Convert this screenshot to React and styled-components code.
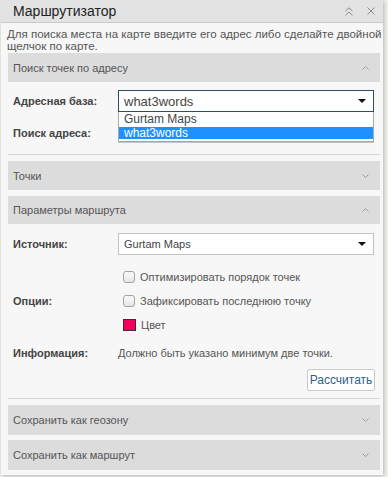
import React from "react";
import styled, { createGlobalStyle } from "styled-components";

const Global = createGlobalStyle`
  html, body { margin: 0; padding: 0; }
  body {
    width: 388px; height: 477px; overflow: hidden;
    background: #f2f0eb;
    font-family: "Liberation Sans", Arial, sans-serif;
  }
`;

const Page = styled.div`
  width: 388px;
  height: 477px;
  background: #f2f0eb;
  display: flex;
  align-items: flex-start;
`;

const Panel = styled.div`
  width: 382px;
  margin-left: 1px;
  background: #f7f7f7;
  box-shadow: 1px 1px 4px rgba(0, 0, 0, 0.25);
  padding-bottom: 5px;
`;

const Header = styled.div`
  height: 23px;
  box-sizing: border-box;
  background: #e3e3e3;
  border-bottom: 1px solid #c9c9c9;
  display: flex;
  align-items: center;
  padding: 0 8px 0 12px;
`;

const Title = styled.div`
  flex: 1;
  font-size: 14px;
  color: #222;
`;

const HeaderIcons = styled.div`
  display: flex;
  gap: 14px;
  align-items: center;
`;

const IconBtn = styled.span`
  display: inline-flex;
  width: 8px;
  height: 10px;
  align-items: center;
  justify-content: center;
`;

const Body = styled.div`
  padding: 5px 3px 0 6px;
`;

const Description = styled.p`
  margin: 0 -5px 0 0;
  font-size: 11.5px;
  line-height: 12px;
  color: #555;
  height: 25px;
`;

const Section = styled.div`
  margin-left: 1px;
  margin-bottom: ${(p) => p.$mb ?? 6}px;
  border-bottom: ${(p) => (p.$open ? "1px solid #d6d6d6" : "none")};
`;

const SectionHead = styled.div`
  height: ${(p) => p.$h ?? 29}px;
  background: #dcdcdc;
  display: flex;
  align-items: center;
  padding: 0 11px 0 5px;
  font-size: 11px;
  color: #555;
`;

const HeadText = styled.span`
  flex: 1;
`;

const Content = styled.div`
  padding: ${(p) => p.$pad};
  display: flex;
  flex-direction: column;
`;

const Row = styled.div`
  display: flex;
  align-items: center;
  min-height: ${(p) => p.$h ?? 22}px;
  margin-top: ${(p) => p.$mt ?? 0}px;
  padding-left: 5px;
`;

const Label = styled.div`
  width: 105px;
  flex: none;
  font-size: 11px;
  font-weight: bold;
  color: #444;
`;

const SelectWrap = styled.div`
  position: relative;
  width: 256px;
`;

const SelectBox = styled.div`
  height: 22px;
  box-sizing: border-box;
  border: 1px solid ${(p) => (p.$focus ? "#2c4f5e" : "#c2c2c2")};
  background: #fff;
  display: flex;
  align-items: center;
  padding: 0 7px 0 5px;
  font-size: ${(p) => (p.$focus ? 13 : 11)}px;
  color: #444;
`;

const SelectText = styled.span`
  flex: 1;
`;

const Caret = styled.span`
  width: 0;
  height: 0;
  border-left: 4px solid transparent;
  border-right: 4px solid transparent;
  border-top: 4px solid #111;
`;

const DropList = styled.div`
  position: absolute;
  top: 22px;
  left: 0;
  right: 0;
  background: #fff;
  border: 1px solid #a8a8a8;
  border-top: none;
  padding-bottom: 2px;
  z-index: 2;
`;

const DropItem = styled.div`
  height: ${(p) => (p.$sel ? 12 : 15)}px;
  line-height: ${(p) => (p.$sel ? 12 : 15)}px;
  padding-left: 5px;
  font-size: 12px;
  color: ${(p) => (p.$sel ? "#fff" : "#444")};
  background: ${(p) => (p.$sel ? "#1e90ff" : "#fff")};
`;

const TextInput = styled.div`
  width: 256px;
  height: 20px;
  box-sizing: border-box;
  border: 1px solid #c2c2c2;
  background: #fff;
`;

const Options = styled.div`
  display: flex;
  flex-direction: column;
  padding-left: 5px;
`;

const OptionRow = styled.div`
  height: 24px;
  display: flex;
  align-items: center;
  gap: 5px;
  font-size: 11px;
  color: #555;
`;

const Checkbox = styled.span`
  width: 12px;
  height: 12px;
  box-sizing: border-box;
  border: 1px solid #a4a4a4;
  border-radius: 3px;
  background: linear-gradient(#fafafa, #e6e6e6);
`;

const Swatch = styled.span`
  width: 13px;
  height: 12px;
  box-sizing: border-box;
  border: 1px solid #333;
  background: ${(p) => p.$c};
`;

const InfoText = styled.div`
  font-size: 11px;
  color: #555;
`;

const ButtonRow = styled.div`
  display: flex;
  justify-content: flex-end;
  padding-right: 5px;
  margin-top: 4px;
`;

const Button = styled.button`
  height: 22px;
  width: 68px;
  padding: 0;
  box-sizing: border-box;
  border: 1px solid #c8c8c8;
  border-radius: 2px;
  background: #fff;
  font-family: "Liberation Sans", Arial, sans-serif;
  font-size: 12px;
  color: #2e5f8c;
`;

const Chevron = ({ up }) => (
  <svg width="7" height="4" viewBox="0 0 7 4">
    <path
      d={up ? "M0.5 3.5 L3.5 0.5 L6.5 3.5" : "M0.5 0.5 L3.5 3.5 L6.5 0.5"}
      fill="none"
      stroke="#9a9a9a"
      strokeWidth="1"
    />
  </svg>
);

const DoubleUp = () => (
  <svg width="8" height="9" viewBox="0 0 8 9">
    <path d="M0.5 4 L4 0.8 L7.5 4 M0.5 8.3 L4 5 L7.5 8.3" fill="none" stroke="#8a8a8a" strokeWidth="1" />
  </svg>
);

const Close = () => (
  <svg width="8" height="8" viewBox="0 0 8 8">
    <path d="M0.5 0.5 L7.5 7.5 M7.5 0.5 L0.5 7.5" fill="none" stroke="#8a8a8a" strokeWidth="1" />
  </svg>
);

export default function App() {
  return (
    <>
      <Global />
      <Page>
        <Panel>
          <Header>
            <Title>Маршрутизатор</Title>
            <HeaderIcons>
              <IconBtn><DoubleUp /></IconBtn>
              <IconBtn><Close /></IconBtn>
            </HeaderIcons>
          </Header>
          <Body>
            <Description>
              Для поиска места на карте введите его адрес либо сделайте двойной щелчок по карте.
            </Description>

            <Section $open>
              <SectionHead>
                <HeadText>Поиск точек по адресу</HeadText>
                <Chevron up />
              </SectionHead>
              <Content $pad="8px 0 10px">
                <Row>
                  <Label>Адресная база:</Label>
                  <SelectWrap>
                    <SelectBox $focus>
                      <SelectText>what3words</SelectText>
                      <Caret />
                    </SelectBox>
                    <DropList>
                      <DropItem>Gurtam Maps</DropItem>
                      <DropItem $sel>what3words</DropItem>
                    </DropList>
                  </SelectWrap>
                </Row>
                <Row $mt={10}>
                  <Label>Поиск адреса:</Label>
                  <TextInput />
                </Row>
              </Content>
            </Section>

            <Section>
              <SectionHead>
                <HeadText>Точки</HeadText>
                <Chevron />
              </SectionHead>
            </Section>

            <Section $open>
              <SectionHead $h={28}>
                <HeadText>Параметры маршрута</HeadText>
                <Chevron up />
              </SectionHead>
              <Content $pad="9px 0 7px">
                <Row>
                  <Label>Источник:</Label>
                  <SelectWrap>
                    <SelectBox>
                      <SelectText>Gurtam Maps</SelectText>
                      <Caret />
                    </SelectBox>
                  </SelectWrap>
                </Row>
                <Row $mt={10}>
                  <Label>Опции:</Label>
                  <Options>
                    <OptionRow><Checkbox />Оптимизировать порядок точек</OptionRow>
                    <OptionRow><Checkbox />Зафиксировать последнюю точку</OptionRow>
                    <OptionRow><Swatch $c="#f5005f" />Цвет</OptionRow>
                  </Options>
                </Row>
                <Row $mt={4} $h={24}>
                  <Label>Информация:</Label>
                  <InfoText>Должно быть указано минимум две точки.</InfoText>
                </Row>
                <ButtonRow>
                  <Button>Рассчитать</Button>
                </ButtonRow>
              </Content>
            </Section>

            <Section $mb={5}>
              <SectionHead $h={30}>
                <HeadText>Сохранить как геозону</HeadText>
                <Chevron />
              </SectionHead>
            </Section>

            <Section $mb={0}>
              <SectionHead $h={30}>
                <HeadText>Сохранить как маршрут</HeadText>
                <Chevron />
              </SectionHead>
            </Section>
          </Body>
        </Panel>
      </Page>
    </>
  );
}
